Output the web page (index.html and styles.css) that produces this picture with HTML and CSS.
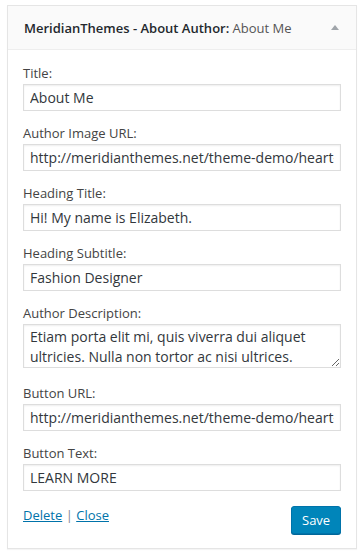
FILE: index.html
```html
<!DOCTYPE html>
<html lang="en">

<head>
    <meta charset="UTF-8">
    <title>Widget</title>
    <link rel="stylesheet" href="styles.css">
</head>

<body>
    <div class="widget">
        <div class="widget-top">
            <h3 class="widget-title">MeridianThemes - About Author:<span class="in-title"> About Me</span></h3>
            <span class="toggle-arrow"></span>
        </div>
        <div class="widget-inside">
            <p class="field">
                <label>Title:</label>
                <input class="widefat" type="text" value="About Me">
            </p>
            <p class="field">
                <label>Author Image URL:</label>
                <input class="widefat" type="text" value="http://meridianthemes.net/theme-demo/heart-and-style/wp-content/uploads/author.jpg">
            </p>
            <p class="field">
                <label>Heading Title:</label>
                <input class="widefat" type="text" value="Hi! My name is Elizabeth.">
            </p>
            <p class="field">
                <label>Heading Subtitle:</label>
                <input class="widefat" type="text" value="Fashion Designer">
            </p>
            <p class="field field-textarea">
                <label>Author Description:</label>
                <textarea class="widefat" rows="2">Etiam porta elit mi, quis viverra dui aliquet ultricies. Nulla non tortor ac nisi ultrices.</textarea>
            </p>
            <p class="field">
                <label>Button URL:</label>
                <input class="widefat" type="text" value="http://meridianthemes.net/theme-demo/heart-and-style/about/">
            </p>
            <p class="field">
                <label>Button Text:</label>
                <input class="widefat" type="text" value="LEARN MORE">
            </p>
            <div class="widget-control-actions">
                <div class="control-links">
                    <a href="#">Delete</a> <span class="sep">|</span> <a href="#">Close</a>
                </div>
                <button class="button-primary">Save</button>
            </div>
        </div>
    </div>
</body>

</html>
```

FILE: styles.css
```css
body {
    margin: 0;
    padding: 5px 7px;
    background: #fff;
    font-family: "Open Sans", sans-serif;
    font-size: 13px;
    color: #444;
}

.widget {
    width: 350px;
    box-sizing: border-box;
    border: 1px solid #e5e5e5;
    background: #fff;
    box-shadow: 0 1px 1px rgba(0, 0, 0, 0.04);
}

.widget-top {
    display: flex;
    align-items: center;
    justify-content: space-between;
    height: 43px;
    padding: 0 17px 0 16px;
    background: #fafafa;
    border-bottom: 1px solid #eee;
}

.widget-title {
    margin: 0;
    font-size: 13px;
    font-weight: 600;
    color: #23282d;
    white-space: nowrap;
}

.in-title {
    font-weight: 400;
    color: #555;
}

.toggle-arrow {
    width: 0;
    height: 0;
    border-left: 4px solid transparent;
    border-right: 4px solid transparent;
    border-bottom: 5px solid #a0a5aa;
}

.widget-inside {
    padding: 1px 15px 14px;
}

.field {
    margin: 13px 0 0;
}

.field-textarea {
    padding-bottom: 3px;
}

.field label {
    display: block;
    line-height: 19px;
    color: #444;
}

.widefat {
    display: block;
    width: 318px;
    box-sizing: border-box;
    margin: 1px 0 0;
    padding: 2px 6px;
    height: 27px;
    border: 1px solid #ddd;
    box-shadow: inset 0 1px 2px rgba(0, 0, 0, 0.07);
    background: #fff;
    color: #32373c;
    font-family: "Open Sans", sans-serif;
    font-size: 14px;
    outline: none;
}

textarea.widefat {
    height: 44px;
    padding: 2px 6px;
    line-height: 20px;
    resize: vertical;
    overflow: hidden;
}

.widget-control-actions {
    display: flex;
    justify-content: space-between;
    align-items: flex-start;
    margin-top: 15px;
}

.control-links {
    line-height: 19px;
    color: #82878c;
}

.control-links a {
    color: #0073aa;
    text-decoration: underline;
}

.button-primary {
    width: 50px;
    height: 28px;
    padding: 0 10px 1px;
    border: 1px solid #0073aa;
    border-radius: 3px;
    background: #0085ba;
    box-shadow: 0 1px 0 #006799;
    color: #fff;
    font-family: "Open Sans", sans-serif;
    font-size: 13px;
    line-height: 26px;
}
```
